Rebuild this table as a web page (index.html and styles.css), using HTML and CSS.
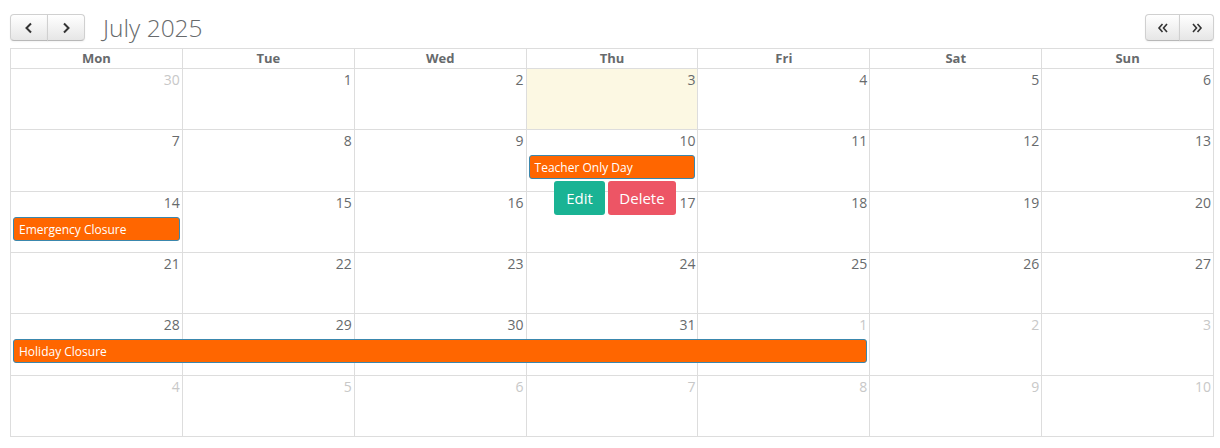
FILE: index.html
```html
<!DOCTYPE html>
<html>
<head>
<meta charset="utf-8">
<link rel="stylesheet" href="styles.css">
</head>
<body>
<div class="cal">
  <div class="toolbar">
    <div class="left">
      <div class="btn-group">
        <button class="btn"><svg width="10" height="12" viewBox="0 0 10 12"><path d="M7 1.5 L2.5 6 L7 10.5" fill="none" stroke="#333" stroke-width="2"/></svg></button>
        <button class="btn"><svg width="10" height="12" viewBox="0 0 10 12"><path d="M3 1.5 L7.5 6 L3 10.5" fill="none" stroke="#333" stroke-width="2"/></svg></button>
      </div>
      <h2 class="title">July 2025</h2>
    </div>
    <div class="btn-group">
      <button class="btn sm"><svg width="12" height="12" viewBox="0 0 12 12"><path d="M5.5 2 L2 6 L5.5 10 M10 2 L6.5 6 L10 10" fill="none" stroke="#333" stroke-width="1.6"/></svg></button>
      <button class="btn sm"><svg width="12" height="12" viewBox="0 0 12 12"><path d="M2 2 L5.5 6 L2 10 M6.5 2 L10 6 L6.5 10" fill="none" stroke="#333" stroke-width="1.6"/></svg></button>
    </div>
  </div>

  <div class="grid">
    <div class="head">
      <div>Mon</div><div>Tue</div><div>Wed</div><div>Thu</div><div>Fri</div><div>Sat</div><div>Sun</div>
    </div>

    <div class="week">
      <div class="day other">30</div><div class="day">1</div><div class="day">2</div><div class="day today">3</div><div class="day">4</div><div class="day">5</div><div class="day">6</div>
    </div>
    <div class="week">
      <div class="day">7</div><div class="day">8</div><div class="day">9</div><div class="day">10</div><div class="day">11</div><div class="day">12</div><div class="day">13</div>
      <div class="event c4">Teacher Only Day</div>
      <div class="actions">
        <button class="act edit">Edit</button><button class="act del">Delete</button>
      </div>
    </div>
    <div class="week">
      <div class="day">14</div><div class="day">15</div><div class="day">16</div><div class="day">17</div><div class="day">18</div><div class="day">19</div><div class="day">20</div>
      <div class="event c1">Emergency Closure</div>
    </div>
    <div class="week">
      <div class="day">21</div><div class="day">22</div><div class="day">23</div><div class="day">24</div><div class="day">25</div><div class="day">26</div><div class="day">27</div>
    </div>
    <div class="week">
      <div class="day">28</div><div class="day">29</div><div class="day">30</div><div class="day">31</div><div class="day other">1</div><div class="day other">2</div><div class="day other">3</div>
      <div class="event c1-5">Holiday Closure</div>
    </div>
    <div class="week">
      <div class="day other">4</div><div class="day other">5</div><div class="day other">6</div><div class="day other">7</div><div class="day other">8</div><div class="day other">9</div><div class="day other">10</div>
    </div>
  </div>
</div>
</body>
</html>
```

FILE: styles.css
```css
* { box-sizing: border-box; }
html, body { margin: 0; padding: 0; background: #fff; }
body {
  font-family: "Open Sans", "Liberation Sans", sans-serif;
  color: #676a6c;
  width: 1220px;
  height: 448px;
  overflow: hidden;
}
.cal { padding: 14px 6px 0 10px; }
.toolbar {
  display: flex;
  justify-content: space-between;
  align-items: center;
  height: 27px;
  margin-bottom: 7px;
}
.left { display: flex; align-items: center; }
.btn-group { display: flex; }
.btn {
  height: 27px;
  width: 38px;
  padding: 0;
  margin: 0;
  border: 1px solid #d0d0d0;
  border-bottom-color: #b8b8b8;
  background: linear-gradient(#ffffff, #e6e6e6);
  box-shadow: inset 0 1px 0 rgba(255,255,255,.3), 0 1px 2px rgba(0,0,0,.05);
  display: flex;
  align-items: center;
  justify-content: center;
}
.btn + .btn { margin-left: -1px; }
.btn:first-child { border-radius: 4px 0 0 4px; }
.btn:last-child { border-radius: 0 4px 4px 0; }
.btn.sm { width: 35px; }
.title {
  margin: 0 0 0 18px;
  font-size: 24.5px;
  font-weight: 300;
  color: #676a6c;
  line-height: 30px;
}
.grid {
  width: 1204px;
  border-left: 1px solid #ddd;
  border-top: 1px solid #ddd;
}
.head, .week {
  display: grid;
  grid-template-columns: repeat(7, 1fr);
}
.head div {
  border-right: 1px solid #ddd;
  border-bottom: 1px solid #ddd;
  height: 20px;
  text-align: center;
  font-size: 13px;
  font-weight: 700;
  line-height: 19px;
  color: #676a6c;
}
.week {
  position: relative;
  height: 61.33px;
  grid-template-rows: 100%;
}
.day {
  grid-row: 1;
  border-right: 1px solid #ddd;
  border-bottom: 1px solid #ddd;
  text-align: right;
  font-size: 14px;
  line-height: 20px;
  padding: 1px 2px 0 0;
  color: #676a6c;
}
.day:nth-child(1) { grid-column: 1; }
.day:nth-child(2) { grid-column: 2; }
.day:nth-child(3) { grid-column: 3; }
.day:nth-child(4) { grid-column: 4; }
.day:nth-child(5) { grid-column: 5; }
.day:nth-child(6) { grid-column: 6; }
.day:nth-child(7) { grid-column: 7; }
.day.other { color: #c8c8c8; }
.day.today { background: #fcf8e3; }
.event {
  grid-row: 1;
  align-self: start;
  margin: 25px 3px 0 2px;
  height: 24px;
  background: #ff6600;
  border: 1px solid #3a87ad;
  border-radius: 3px;
  color: #fff;
  font-size: 12px;
  line-height: 23px;
  padding-left: 5px;
  white-space: nowrap;
}
.event.c4 { grid-column: 4; }
.event.c1 { grid-column: 1; }
.event.c1-5 { grid-column: 1 / span 5; }
.actions {
  position: absolute;
  left: 543px;
  top: 51px;
  display: flex;
  gap: 3px;
  z-index: 2;
}
.act {
  height: 34px;
  border: 0;
  border-radius: 3px;
  color: #fff;
  font-family: "Open Sans", "Liberation Sans", sans-serif;
  font-size: 15px;
  padding: 0;
}
.act.edit { background: #1ab394; width: 51px; }
.act.del { background: #ed5565; width: 68px; }
```
